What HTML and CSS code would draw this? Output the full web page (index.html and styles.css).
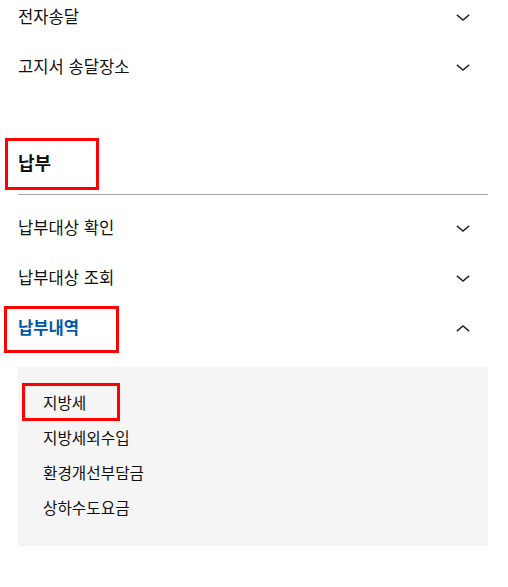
FILE: index.html
```html
<!DOCTYPE html>
<html lang="ko">
<head>
<meta charset="utf-8">
<link rel="stylesheet" href="styles.css">
</head>
<body>
<div class="page">
  <ul class="menu first">
    <li class="row"><span>전자송달</span><svg class="chev" viewBox="0 0 16 8"><polyline points="1,1 8,7 15,1"/></svg></li>
    <li class="row"><span>고지서 송달장소</span><svg class="chev" viewBox="0 0 16 8"><polyline points="1,1 8,7 15,1"/></svg></li>
  </ul>
  <h2 class="section"><span class="mark mark-head"></span>납부</h2>
  <ul class="menu">
    <li class="row"><span>납부대상 확인</span><svg class="chev" viewBox="0 0 16 8"><polyline points="1,1 8,7 15,1"/></svg></li>
    <li class="row"><span>납부대상 조회</span><svg class="chev" viewBox="0 0 16 8"><polyline points="1,1 8,7 15,1"/></svg></li>
    <li class="row active"><span class="mark mark-active"></span><span>납부내역</span><svg class="chev" viewBox="0 0 16 8"><polyline points="1,7 8,1 15,7"/></svg></li>
  </ul>
  <ul class="sub">
    <li class="sub-item"><span class="mark mark-sub"></span>지방세</li>
    <li class="sub-item">지방세외수입</li>
    <li class="sub-item">환경개선부담금</li>
    <li class="sub-item">상하수도요금</li>
  </ul>
</div>
</body>
</html>
```
FILE: styles.css
```css
* { box-sizing: border-box; }
html, body { margin: 0; padding: 0; background: #fff; }
body {
  font-family: "Noto Sans CJK KR", "Noto Sans", sans-serif;
  color: #111;
}
.page {
  width: 470px;
  margin: -8px 0 0 18px;
  position: relative;
}
.menu { list-style: none; margin: 0; padding: 0; }
.row {
  position: relative;
  height: 50px;
  display: flex;
  align-items: center;
  justify-content: space-between;
  font-size: 16.6px;
  padding-right: 18px;
}
.row > span:not(.mark) { position: relative; top: -1px; }
.chev {
  width: 14px;
  height: 7px;
  fill: none;
  stroke: #222;
  stroke-width: 1.6;
  overflow: visible;
}
.section {
  position: relative;
  margin: 58px 0 0 0;
  padding: 0 0 20px 0;
  font-size: 18px;
  font-weight: 700;
  line-height: 24px;
  border-bottom: 1px solid #aaa;
}
.section + .menu { margin-top: 8px; }
.active { color: #0058a8; font-weight: 700; }
.sub {
  list-style: none;
  margin: 14px 0 0 0;
  padding: 18px 0 21px 25px;
  background: #f5f5f5;
}
.sub-item {
  position: relative;
  height: 35px;
  line-height: 35px;
  font-size: 15.7px;
  color: #111;
}
.mark {
  position: absolute;
  border: 3px solid #f00;
  pointer-events: none;
}
.mark-head { left: -13px; top: -12px; width: 94px; height: 52px; }
.mark-active { left: -14px; top: 3px; width: 115px; height: 47px; }
.mark-sub { left: -21px; top: -2px; width: 98px; height: 38px; }
```
